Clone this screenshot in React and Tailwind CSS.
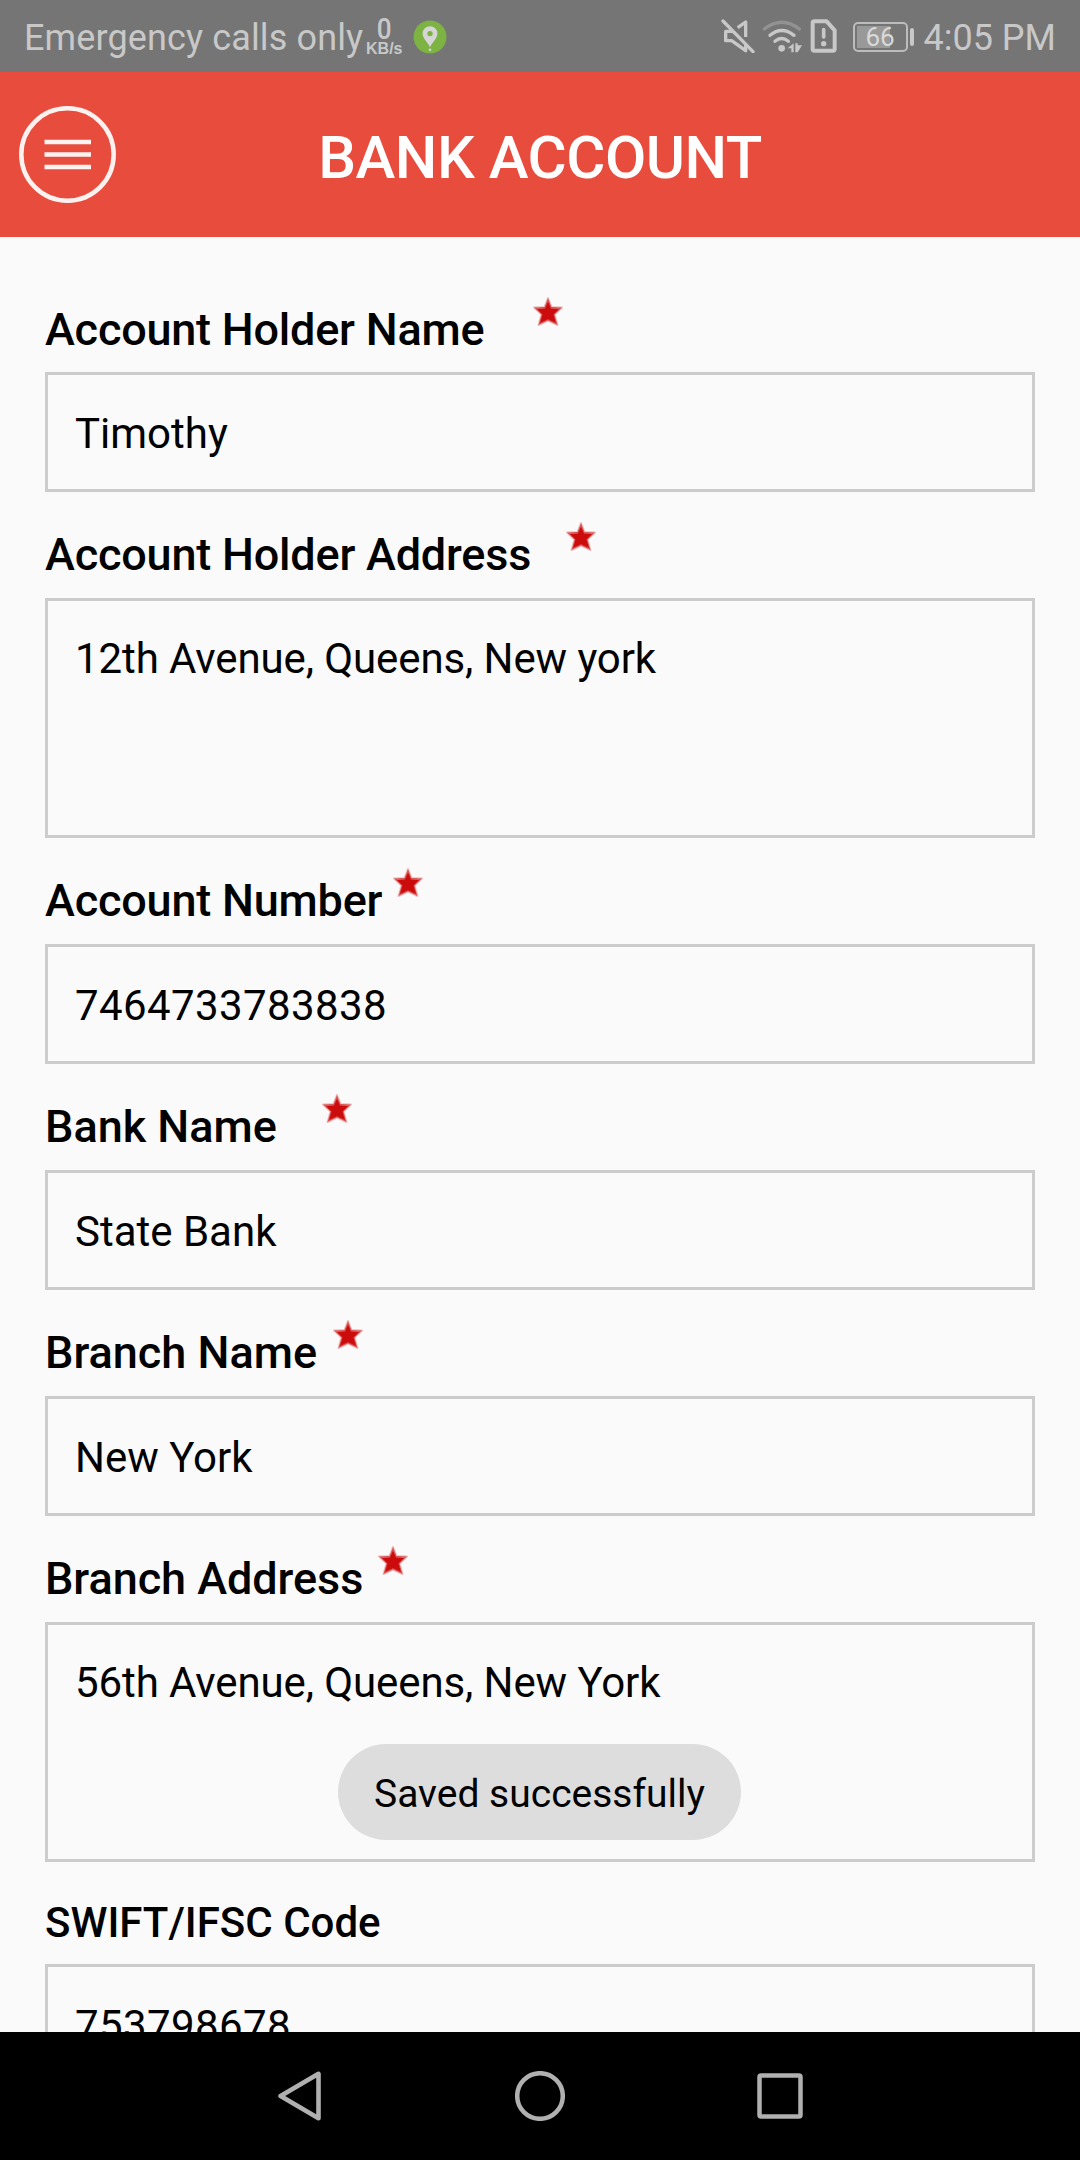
const FIELDS = [
  { label: 'Account Holder Name', value: 'Timothy', labelWidth: 'w-[488px] tracking-[-0.22px]', required: true },
  { label: 'Account Holder Address', value: '12th Avenue, Queens, New york', labelWidth: 'w-[521px] tracking-[-0.2px]', valueTracking: 'tracking-[-0.1px]', required: true, multiline: true },
  { label: 'Account Number', value: '7464733783838', labelWidth: 'w-[348px] tracking-[-0.2px]', valueTracking: 'tracking-[0.39px]', required: true },
  { label: 'Bank Name', value: 'State Bank', labelWidth: 'w-[277px]', required: true },
  { label: 'Branch Name', value: 'New York', labelWidth: 'w-[288px]', required: true },
  { label: 'Branch Address', value: '56th Avenue, Queens, New York', labelWidth: 'w-[333px] tracking-[-0.05px]', valueTracking: 'tracking-[-0.1px]', required: true, multiline: true },
  { label: 'SWIFT/IFSC Code', value: '753798678', labelWidth: 'w-[400px]', valueTracking: 'tracking-[0.39px]' },
];

function LocationIcon() {
  return (
    <svg className="ml-[11px] h-[34px] w-[34px]" viewBox="0 0 34 34">
      <circle cx="17" cy="17" r="16.5" fill="#7cb342" />
      <path fillRule="evenodd" fill="#d6d6d6" d="M17 6.2a7.4 7.4 0 0 0-7.4 7.4c0 5 5 8.6 7.4 13.6 2.4-5 7.4-8.6 7.4-13.6A7.4 7.4 0 0 0 17 6.2Zm0 4.7a2.7 2.7 0 1 1 0 5.4 2.7 2.7 0 0 1 0-5.4Z" />
      <circle cx="17" cy="29.7" r="1.3" fill="#d6d6d6" />
    </svg>
  );
}

function MutedIcon() {
  return (
    <svg className="h-[34px] w-[34px]" viewBox="60 28 102 102" fill="none" stroke="#c8c8c8" strokeWidth="10">
      <path d="M66 34 156 126" strokeLinecap="round" />
      <path d="M96 65H74V93H92L134 123V104" strokeLinejoin="round" />
      <path d="M110 54 134 37V82" strokeLinejoin="round" />
    </svg>
  );
}

function WifiIcon() {
  return (
    <svg className="ml-[7px] h-[34px] w-[40px]" viewBox="184 26 120 102" fill="none" stroke="#c8c8c8" strokeWidth="10" strokeLinecap="round">
      <path d="M191 56Q243 15 296 56" stroke="#929292" />
      <path d="M208 75Q243 46 280 75" />
      <path d="M223 93Q243 76 263 93" />
      <circle cx="243" cy="114" r="10" fill="#c8c8c8" stroke="none" />
      <path d="M261 114 279 99V126H272V114ZM284 99H291V105H304L291 126H284Z" fill="#c8c8c8" stroke="none" />
    </svg>
  );
}

function SimAlertIcon() {
  return (
    <svg className="ml-[8px] mr-px h-[34px] w-[27px]" viewBox="331 25 81 102" fill="none" stroke="#c8c8c8" strokeWidth="12" strokeLinejoin="round">
      <path d="M344 32H381L405 59V115Q405 120 400 120H344Q339 120 339 115V37Q339 32 344 32Z" />
      <path d="M372 57V79" strokeLinecap="round" strokeWidth="11" />
      <circle cx="372" cy="99" r="8" fill="#c8c8c8" stroke="none" />
    </svg>
  );
}

function Battery() {
  return (
    <div className="ml-[15px] flex items-center gap-[2px]">
      <div className="relative flex h-[30px] w-[55px] items-center justify-center rounded-[5px] border-2 border-[#bcbcbc]">
        <div className="absolute left-[2px] top-[2px] h-[22px] w-[33px] bg-[#999999]" />
        <span className="relative text-[26px] leading-[26px] text-[#d8d8d8]">66</span>
      </div>
      <div className="h-[18px] w-[4px] rounded-[2px] bg-[#c8c8c8]" />
    </div>
  );
}

function StatusBar() {
  return (
    <div className="flex h-[72px] items-center justify-between bg-[#757575] pl-[24px] pr-[24px] pt-[1px] text-[36px] leading-[42px] text-[#c8c8c8]">
      <div className="flex items-center">
        <span className="pt-[2px] tracking-[0.13px]">Emergency calls only</span>
        <div className="ml-[3px] flex w-[36px] flex-col items-center font-['Liberation_Sans',sans-serif] font-bold">
          <span className="scale-x-90 pt-[2px] font-['Roboto',sans-serif] text-[29px] font-medium leading-[21px]">0</span>
          <span className="text-[16px] leading-[17px]">KB/s</span>
        </div>
        <LocationIcon />
      </div>
      <div className="flex items-center">
        <div className="flex items-center pb-[2px]">
          <MutedIcon />
          <WifiIcon />
          <SimAlertIcon />
        </div>
        <Battery />
        <span className="ml-[10px] pt-[2px]">4:05 PM</span>
      </div>
    </div>
  );
}

function Header() {
  return (
    <header className="relative flex h-[165px] items-center justify-center bg-[#e84c3d]">
      <button className="absolute left-[19px] top-[34px] h-[97px] w-[97px]" aria-label="Menu">
        <svg className="h-full w-full" viewBox="0 0 97 97" fill="none" stroke="#ffffff" strokeWidth="4.5" strokeOpacity="0.93">
          <circle cx="48.5" cy="48.5" r="46.2" />
          <path d="M25.5 36H72M25.5 48.5H72M25.5 61H72" />
        </svg>
      </button>
      <h1 className="pt-[7px] text-[60px] font-medium leading-[70px] tracking-[-0.5px] text-white">BANK ACCOUNT</h1>
    </header>
  );
}

function RequiredStar() {
  return (
    <svg className="mt-[30px] h-[30px] w-[30px]" viewBox="0 0 30 30">
      <path d="M15 1 18.5 10 29 10.5 21.5 17.5 24.5 28 15 23.5 5.5 28 8.5 17.5 1 10.5 11.5 10Z" fill="#cc0c0c" fillOpacity="0.6" stroke="#cc0c0c" strokeOpacity="0.25" strokeWidth="2" strokeLinejoin="round" />
      <path d="M15 4.500 18 11.500 26 12 20.500 17.500 23 26 15 22.300 7 26 9.500 17.500 4 12 12 11.500Z" fill="#cc0c0c" />
    </svg>
  );
}

function Field({ label, value, labelWidth, valueTracking = '', required, multiline }) {
  return (
    <div className="group">
      <div className={required ? 'flex h-[106px] group-first:h-[105px]' : 'flex h-[102px]'}>
        <label className={`${labelWidth} shrink-0 whitespace-nowrap pt-[36px] font-medium ${required ? 'text-[45px] leading-[53px]' : 'text-[42px] leading-[50px]'}`}>
          {label}
        </label>
        {required && <RequiredStar />}
      </div>
      <div className={`border-[3px] border-[#cccccc] pl-[27px] text-[42px] leading-[50px] ${valueTracking} ${multiline ? 'h-[240px] pt-[33px]' : 'h-[120px] pt-[34px]'}`}>
        {value}
      </div>
    </div>
  );
}

function NavBar() {
  return (
    <nav className="flex h-[128px] shrink-0 items-center justify-center gap-[190px] bg-black">
      <svg className="h-[50px] w-[50px]" viewBox="0 0 50 50" fill="none" stroke="#b0b0b0" strokeWidth="4.6" strokeLinejoin="round">
        <path d="M43.5 2.8V47.2L5.6 25Z" />
      </svg>
      <svg className="h-[50px] w-[50px]" viewBox="0 0 50 50" fill="none" stroke="#b0b0b0" strokeWidth="4.5">
        <circle cx="25" cy="25" r="22.8" />
      </svg>
      <svg className="h-[50px] w-[50px]" viewBox="0 0 50 50" fill="none" stroke="#b0b0b0" strokeWidth="4.5">
        <rect x="4.5" y="4.5" width="41" height="41" rx="1.5" />
      </svg>
    </nav>
  );
}

export default function App() {
  return (
    <div className="relative flex h-[2160px] w-[1080px] flex-col overflow-hidden bg-[#fafafa] font-['Roboto',sans-serif] text-black">
      <StatusBar />
      <Header />
      <main className="min-h-0 flex-1 overflow-hidden px-[45px] pt-[30px]">
        {FIELDS.map((field) => (
          <Field key={field.label} {...field} />
        ))}
      </main>
      <NavBar />
      <div className="absolute left-[338px] top-[1744px] flex h-[96px] w-[403px] items-center justify-center rounded-full bg-[#dddddd] pt-[4px] text-[39px] leading-[46px]">
        Saved successfully
      </div>
    </div>
  );
}
